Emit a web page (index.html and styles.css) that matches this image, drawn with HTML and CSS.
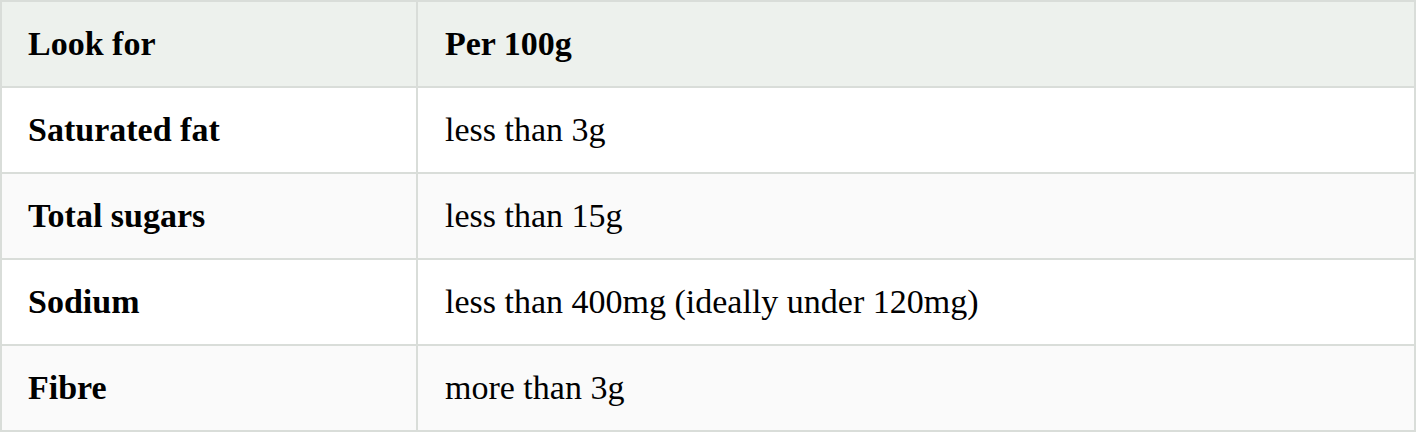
FILE: index.html
```html
<!DOCTYPE html>
<html>
<head>
<meta charset="utf-8">
<link rel="stylesheet" href="styles.css">
</head>
<body>
<table class="nutri">
  <thead>
    <tr><th class="c1">Look for</th><th class="c2">Per 100g</th></tr>
  </thead>
  <tbody>
    <tr><td class="c1 lbl">Saturated fat</td><td class="c2">less than 3g</td></tr>
    <tr class="alt"><td class="c1 lbl">Total sugars</td><td class="c2">less than 15g</td></tr>
    <tr><td class="c1 lbl">Sodium</td><td class="c2">less than 400mg (ideally under 120mg)</td></tr>
    <tr class="alt"><td class="c1 lbl">Fibre</td><td class="c2">more than 3g</td></tr>
  </tbody>
</table>
</body>
</html>
```
FILE: styles.css
```css
html, body {
  margin: 0;
  padding: 0;
  background: #ffffff;
}
.nutri {
  width: 1416px;
  border-collapse: collapse;
  font-family: "Liberation Serif", "Times New Roman", serif;
  font-size: 34px;
  color: #000;
}
.nutri th, .nutri td {
  border: 2px solid #d9ddd9;
  height: 86px;
  padding: 0 26px;
  text-align: left;
  vertical-align: middle;
  box-sizing: border-box;
  line-height: 1.2;
}
.nutri th {
  background: #edf1ed;
  font-weight: bold;
}
.nutri .c1 {
  width: 416px;
}
.nutri .c2 {
  padding-left: 27px;
}
.nutri .lbl {
  font-weight: bold;
}
.nutri .alt td {
  background: #fafafa;
}
```
